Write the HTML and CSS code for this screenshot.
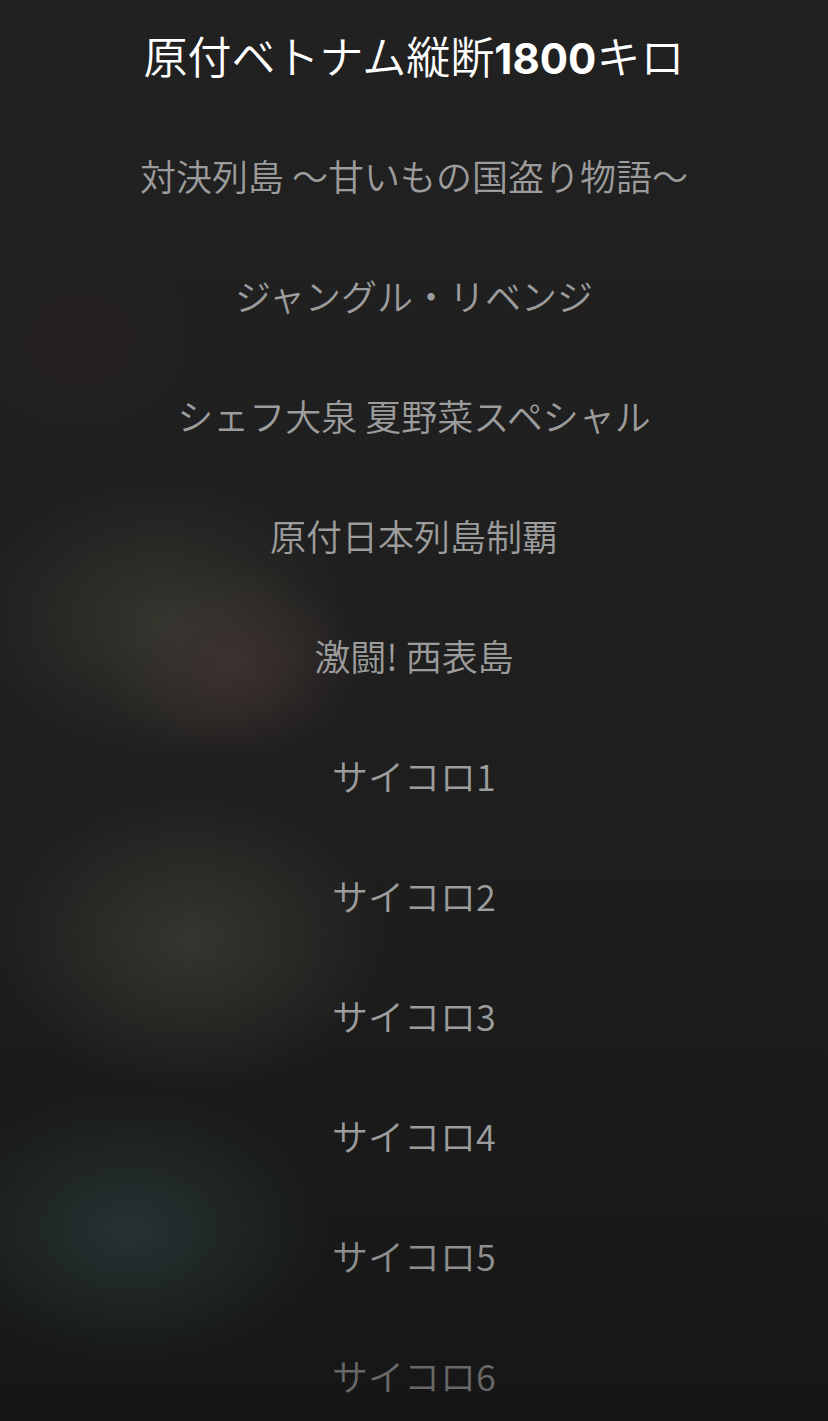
FILE: index.html
```html
<!DOCTYPE html>
<html lang="ja">
<head>
<meta charset="utf-8">
<link rel="stylesheet" href="styles.css">
</head>
<body>
<ul class="picker">
  <li class="item selected">原付ベトナム縦断<span class="num">1800</span>キロ</li>
  <li class="item">対決列島 〜甘いもの国盗り物語〜</li>
  <li class="item">ジャングル・リベンジ</li>
  <li class="item">シェフ大泉 夏野菜スペシャル</li>
  <li class="item">原付日本列島制覇</li>
  <li class="item">激闘! 西表島</li>
  <li class="item">サイコロ1</li>
  <li class="item">サイコロ2</li>
  <li class="item">サイコロ3</li>
  <li class="item">サイコロ4</li>
  <li class="item fade1">サイコロ5</li>
  <li class="item fade2">サイコロ6</li>
</ul>
</body>
</html>
```

FILE: styles.css
```css
html, body {
  margin: 0;
  padding: 0;
  height: 100%;
}
body {
  width: 828px;
  height: 1421px;
  overflow: hidden;
  font-family: "Noto Sans CJK JP", "Noto Sans", sans-serif;
  font-weight: 350;
  background-color: #1e1e1e;
  background-image:
    radial-gradient(ellipse 130px 100px at 235px 665px, rgba(74, 54, 52, 0.6), rgba(74, 54, 52, 0) 100%),
    radial-gradient(ellipse 190px 140px at 160px 620px, rgba(54, 58, 48, 0.8), rgba(54, 58, 48, 0) 100%),
    radial-gradient(ellipse 200px 150px at 190px 940px, rgba(58, 57, 50, 0.85), rgba(58, 57, 50, 0) 100%),
    radial-gradient(ellipse 200px 140px at 130px 1230px, rgba(40, 54, 54, 0.85), rgba(40, 54, 54, 0) 100%),
    radial-gradient(ellipse 140px 120px at 80px 340px, rgba(45, 32, 32, 0.4), rgba(45, 32, 32, 0) 100%),
    linear-gradient(to bottom, #212121 0%, #1e1e1e 60%, #161616 100%);
}
.picker {
  list-style: none;
  margin: -5px 0 0 0;
  padding: 0;
  display: flex;
  flex-direction: column;
  align-items: center;
}
.item {
  height: 120px;
  line-height: 120px;
  font-size: 36px;
  color: #9c9c9c;
  white-space: nowrap;
  text-align: center;
}
.item.selected {
  font-size: 44px;
  color: #ffffff;
}
.num {
  font-family: "Inter", "Noto Sans", sans-serif;
  font-weight: 700;
  font-size: 42px;
}
.item.fade1 {
  color: #8e8e8e;
}
.item.fade2 {
  color: #686868;
}
```
